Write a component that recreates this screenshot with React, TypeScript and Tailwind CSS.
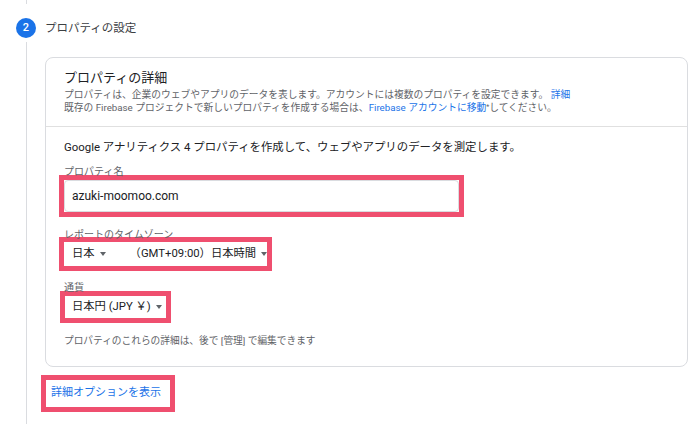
import React from 'react';

const Caret: React.FC = () => (
  <span className="inline-block shrink-0 w-0 h-0 border-x-[3.5px] border-x-transparent border-t-[4px] border-t-[#5f6368] ml-[5px] align-middle" />
);

const App: React.FC = () => {
  return (
    <div className="w-[700px] h-[424px] bg-white overflow-hidden flex font-[Roboto,'Noto_Sans_CJK_JP',sans-serif] text-[#3c4043]">
      {/* step rail */}
      <div className="w-[45px] h-full flex flex-col shrink-0">
        <div className="ml-[26px] w-px h-[4px] bg-[#dadce0]" />
        <div className="ml-[16px] mt-[14px] w-[20px] h-[20px] rounded-full bg-[#1a73e8] text-white text-[11px] font-medium flex items-center justify-center">
          2
        </div>
        <div className="ml-[26px] mt-[4px] w-px flex-1 bg-[#dadce0]" />
      </div>

      <div className="flex-1 pt-[20px]">
        <div className="h-[16px] leading-[16px] text-[11.5px] text-[#3c4043]">プロパティの設定</div>

        <div className="mt-[21px] w-[643px] border border-[#dadce0] rounded-[8px]">
          {/* header */}
          <div className="px-[18px] pt-[12px] pb-[12px] border-b border-[#e0e0e0]">
            <div className="text-[13px] leading-[16px] text-[#202124]">プロパティの詳細</div>
            <div className="mt-[2px] text-[9.75px] leading-[13px] text-[#5f6368]">
              <div>
                プロパティは、企業のウェブやアプリのデータを表します。アカウントには複数のプロパティを設定できます。{' '}
                <span className="text-[#1a73e8]">詳細</span>
              </div>
              <div>
                既存の Firebase プロジェクトで新しいプロパティを作成する場合は、
                <span className="text-[#1a73e8]">Firebase アカウントに移動</span>
                <span className="text-[7px] align-top">*</span>
                してください。
              </div>
            </div>
          </div>

          {/* body */}
          <div className="px-[18px] pt-[13px] pb-[19px]">
            <div className="text-[11.4px] leading-[14px] text-[#202124]">
              Google アナリティクス 4 プロパティを作成して、ウェブやアプリのデータを測定します。
            </div>

            <div className="mt-[12px] text-[10px] leading-[12px] text-[#5f6368]">プロパティ名</div>
            <div className="-mt-[3px] -ml-[5px] w-[405px] h-[42px] border-[5px] border-[#ef4f6f]">
              <div className="h-full border border-[#dadce0] rounded-[4px] flex items-center pl-[7px] text-[12px] text-[#202124]">
                azuki-moomoo.com
              </div>
            </div>

            <div className="mt-[12px] text-[10px] leading-[12px] text-[#5f6368]">レポートのタイムゾーン</div>
            <div className="-mt-[4px] -ml-[5px] w-[213px] h-[34px] border-[5px] border-[#ef4f6f] flex items-center pl-[8px] text-[11.3px] text-[#202124] whitespace-nowrap">
              <span className="flex items-center shrink-0">日本<Caret /></span>
              <span className="ml-[24px] flex items-center shrink-0">（GMT+09:00）日本時間<Caret /></span>
            </div>

            <div className="mt-[11px] text-[10px] leading-[12px] text-[#5f6368]">通貨</div>
            <div className="-mt-[3px] -ml-[4px] w-[111px] h-[32px] border-[5px] border-[#ef4f6f] flex items-center pl-[7px] text-[11.3px] text-[#202124] whitespace-nowrap">
              <span className="flex items-center shrink-0">日本円 (JPY ￥)<Caret /></span>
            </div>

            <div className="mt-[12px] text-[9.7px] leading-[12px] text-[#5f6368]">
              プロパティのこれらの詳細は、後で [管理] で編集できます
            </div>
          </div>
        </div>

        <div className="mt-[8px] -ml-[4px] w-[134px] h-[37px] border-[5px] border-[#ef4f6f] flex items-center pl-[5px] text-[11px] text-[#1a73e8]">
          詳細オプションを表示
        </div>
      </div>
    </div>
  );
};

export default App;
